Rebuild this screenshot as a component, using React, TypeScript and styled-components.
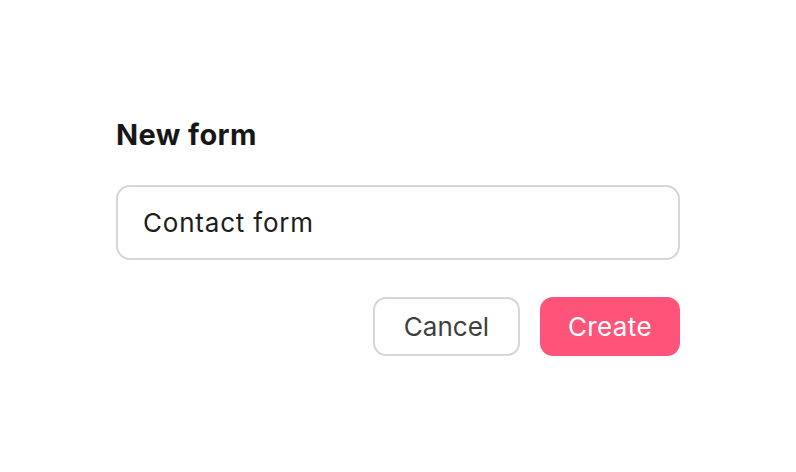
import React, { useState } from "react"
import styled, { createGlobalStyle } from "styled-components"

const GlobalStyle = createGlobalStyle`
  html, body {
    margin: 0;
    padding: 0;
    background: #ffffff;
  }
  body {
    font-family: Inter, "Noto Sans", "Liberation Sans", sans-serif;
  }
`

const Page = styled.div`
  display: flex;
  align-items: center;
  justify-content: center;
  width: 100%;
  min-height: 100vh;
`

const Form = styled.form`
  display: flex;
  flex-direction: column;
  width: 564px;
`

const Title = styled.h1`
  margin: 0 0 32px 0;
  font-size: 29px;
  line-height: 36px;
  font-weight: 700;
  letter-spacing: 0.4px;
  color: #171717;
`

const NameInput = styled.input`
  box-sizing: border-box;
  width: 100%;
  height: 75px;
  padding: 0 25px;
  border: 2px solid #d6d6d6;
  border-radius: 14px;
  font-family: inherit;
  font-size: 26px;
  letter-spacing: 0.8px;
  color: #1c1c1c;
  background: #ffffff;
  outline: none;
`

const Actions = styled.div`
  display: flex;
  justify-content: flex-end;
  gap: 20px;
  margin-top: 37px;
`

const Button = styled.button<{ $primary?: boolean; $width: number }>`
  box-sizing: border-box;
  width: ${(p) => p.$width}px;
  height: 59px;
  padding: 0;
  border-radius: 13px;
  font-family: inherit;
  font-size: 26px;
  letter-spacing: ${(p) => (p.$primary ? "0.4px" : "0")};
  cursor: pointer;
  border: 2px solid ${(p) => (p.$primary ? "#ff5479" : "#d6d6d6")};
  background: ${(p) => (p.$primary ? "#ff5479" : "#ffffff")};
  color: ${(p) => (p.$primary ? "#ffffff" : "#3f3f3f")};
`

export default function App() {
  const [name, setName] = useState("Contact form")

  return (
    <>
      <GlobalStyle />
      <Page>
        <Form onSubmit={(e) => e.preventDefault()}>
          <Title>New form</Title>
          <NameInput value={name} onChange={(e) => setName(e.target.value)} />
          <Actions>
            <Button type="button" $width={147}>
              Cancel
            </Button>
            <Button type="submit" $primary $width={140}>
              Create
            </Button>
          </Actions>
        </Form>
      </Page>
    </>
  )
}
